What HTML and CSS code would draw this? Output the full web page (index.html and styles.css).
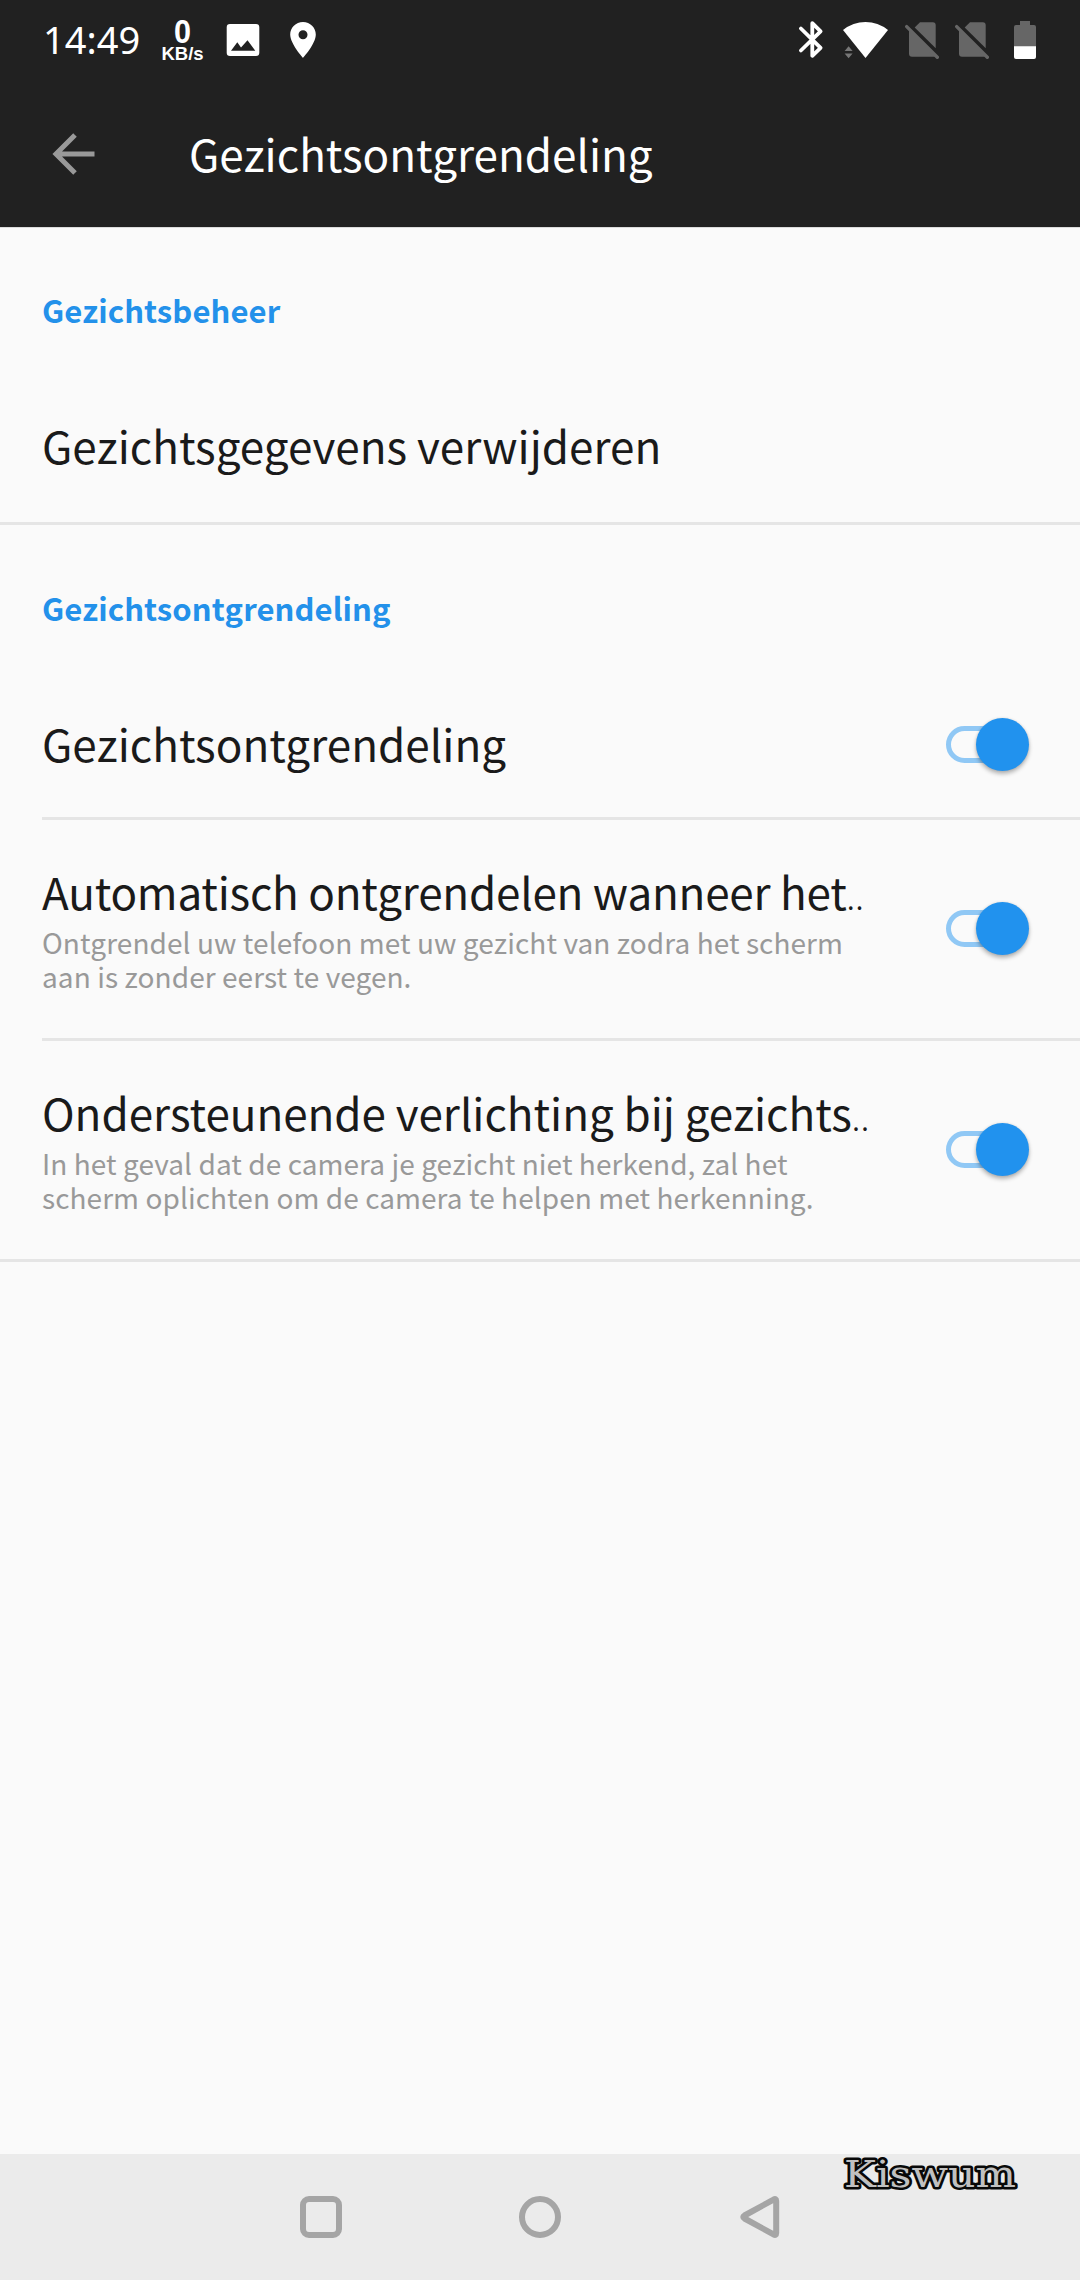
FILE: index.html
```html
<!DOCTYPE html>
<html lang="nl">
<head>
<meta charset="utf-8">
<title>Gezichtsontgrendeling</title>
<link rel="stylesheet" href="styles.css">
</head>
<body>
<div class="screen">
  <header class="header">
    <div class="status-bar">
      <div class="status-left">
        <span class="clock">14:49</span>
        <div class="speed"><span class="speed-value">0</span><span class="speed-unit">KB/s</span></div>
        <svg class="icon-image" width="34" height="40" viewBox="226 20 34 40"><path fill="#fff" fill-rule="evenodd" d="M230 24h26q3.300 0 3.300 3.300v25.400q0 3.300-3.300 3.300h-26q-3.300 0-3.300-3.300V27.300q0-3.300 3.300-3.300zM231 50.700h24.300L247.500 40.300 241 47.500 237.300 42.300z"/></svg>
        <svg class="icon-pin" width="28" height="40" viewBox="289 20 28 40"><path fill="#fff" fill-rule="evenodd" d="M303 22c-7.200 0-12.800 5.600-12.800 12.600C290.200 44 303 58 303 58s12.800-14 12.800-23.400C315.800 27.600 310.200 22 303 22zm0 8.200a4.500 4.500 0 1 1 0 9 4.500 4.500 0 0 1 0-9z"/></svg>
      </div>
      <div class="status-right">
        <svg width="26" height="40" viewBox="798 20 26 40"><path fill="none" stroke="#fff" stroke-width="3.800" stroke-linecap="round" stroke-linejoin="round" d="M800.900 28.500 820.600 47.900 812.300 55.800V23.200L820.600 31.300 800.900 50.500"/></svg>
        <svg class="icon-wifi" width="46" height="40" viewBox="843 20 46 40"><path fill="#fff" d="M865.500 58 843 30Q853 22 865.500 22T888 30z"/><path fill="#777" d="M844.600 51h8l-4-4.800zM844.600 53.400h8l-4 4.800z"/></svg>
        <svg class="icon-sim" width="34" height="40" viewBox="905 20 34 40"><g fill="#666"><path d="M914.700 27.500 920 22.200h12.800q2.900 0 2.900 2.900v23.200z"/><path d="M909 29 936 56l-2 .8H912q-3 0-3-3z"/></g><path stroke="#666" stroke-width="3.400" stroke-linecap="round" d="M906.700 26.600 937.300 57.200"/></svg>
        <svg class="icon-sim" width="34" height="40" viewBox="905 20 34 40"><g fill="#666"><path d="M914.700 27.500 920 22.200h12.800q2.900 0 2.900 2.900v23.200z"/><path d="M909 29 936 56l-2 .8H912q-3 0-3-3z"/></g><path stroke="#666" stroke-width="3.400" stroke-linecap="round" d="M906.700 26.600 937.300 57.200"/></svg>
        <svg class="icon-battery" width="22" height="40" viewBox="1014 20 22 40"><path fill="#666" d="M1020 21h10v4h4q2 0 2 2v20h-22V27q0-2 2-2h4z"/><path fill="#fff" d="M1014 46.300h22V57q0 2-2 2h-18q-2 0-2-2z"/></svg>
      </div>
    </div>
    <div class="app-bar">
      <svg width="44" height="44" viewBox="52 131.500 44 44"><path fill="none" stroke="#999" stroke-width="5" d="M94.500 153.500H56M75 134.500 56 153.500 75 172.500"/></svg>
      <h1 class="title">Gezichtsontgrendeling</h1>
    </div>
  </header>
  <main class="content">
    <section class="group">
      <h2 class="category">Gezichtsbeheer</h2>
      <div class="row row-single row-last"><span class="row-title">Gezichtsgegevens verwijderen</span></div>
    </section>
    <section class="group">
      <h2 class="category">Gezichtsontgrendeling</h2>
      <div class="row row-single">
        <span class="row-title">Gezichtsontgrendeling</span>
        <span class="switch"><span class="track"></span><span class="thumb"></span></span>
      </div>
      <div class="row row-detail">
        <div class="row-text">
          <span class="row-title tight">Automatisch ontgrendelen wanneer het<span class="dots">..</span></span>
          <p class="summary">Ontgrendel uw telefoon met uw gezicht van zodra het scherm<br>aan is zonder eerst te vegen.</p>
        </div>
        <span class="switch"><span class="track"></span><span class="thumb"></span></span>
      </div>
      <div class="row row-detail row-last">
        <div class="row-text">
          <span class="row-title even">Ondersteunende verlichting bij gezichts<span class="dots">..</span></span>
          <p class="summary">In het geval dat de camera je gezicht niet herkend, zal het<br>scherm oplichten om de camera te helpen met herkenning.</p>
        </div>
        <span class="switch"><span class="track"></span><span class="thumb"></span></span>
      </div>
    </section>
  </main>
  <nav class="nav-bar">
    <svg width="44" height="44" viewBox="0 0 44 44"><rect class="nav-shape" x="4" y="4" width="36" height="36" rx="6"/></svg>
    <svg width="44" height="44" viewBox="0 0 44 44"><circle class="nav-shape" cx="22" cy="22" r="18"/></svg>
    <svg width="44" height="44" viewBox="0 0 44 44"><path class="nav-shape" d="M39.200 6V38Q39.200 41 36.500 39.400L7.500 23.500Q5 22 7.500 20.500L36.500 4.600Q39.200 3 39.200 6z"/></svg>
    <svg class="watermark" width="190" height="50" viewBox="0 0 190 50"><text x="9" y="35" textLength="172" lengthAdjust="spacingAndGlyphs">Kiswum</text></svg>
  </nav>
</div>
</body>
</html>
```
FILE: styles.css
```css
* { box-sizing: border-box; }
body { margin: 0; }
h1, h2, p { margin: 0; font-weight: 400; }
svg { display: block; flex: none; }

.screen {
  display: flex;
  flex-direction: column;
  width: 1080px;
  height: 2280px;
  background: #fafafa;
  color: #1a1a1a;
  font-family: "Noto Sans CJK JP", "Noto Sans", sans-serif;
  overflow: hidden;
}

.header { height: 227px; background: #212121; color: #fff; box-shadow: 0 1px 0 #dcdcdc; }
.status-bar { display: flex; justify-content: space-between; height: 80px; padding: 0 44px 0 43px; }
.status-left, .status-right { display: flex; align-items: center; height: 80px; }
.clock { width: 118px; font-family: "Noto Sans", sans-serif; font-size: 38px; line-height: 78px; margin-bottom: 2px; }
.speed { display: flex; flex-direction: column; align-items: center; width: 43px; font-family: "Liberation Sans", sans-serif; font-weight: 700; }
.speed-value { height: 28px; font-size: 34px; line-height: 28px; transform: scaleX(.9); }
.speed-unit { font-size: 18.5px; line-height: 18px; }
.icon-image { margin-left: 22px; }
.icon-pin { margin-left: 29px; }
.icon-wifi { margin-left: 19px; }
.icon-sim { margin-left: 16px; }
.icon-battery { margin-left: 25px; }

.app-bar { display: flex; align-items: center; gap: 93px; height: 147px; padding: 0 52px; }
.title { margin-bottom: 1px; font-size: 44px; line-height: 54px; }

.category { height: 150px; padding: 60px 42px 0; color: #2391ea; font-size: 31px; font-weight: 700; line-height: 45px; letter-spacing: .1px; }
.row { display: flex; justify-content: space-between; margin-left: 42px; padding-right: 51px; border-bottom: 3px solid #e5e5e5; }
.row-last { margin-left: 0; padding-left: 42px; }
.row-single { height: 145px; padding-top: 41px; }
.row-single.row-last { height: 148px; }
.row-detail { height: 221px; padding-top: 44px; }
.row-title { display: block; height: 54px; font-size: 44px; line-height: 54px; letter-spacing: .02px; white-space: nowrap; }
.tight { letter-spacing: -.22px; }
.even { letter-spacing: -.03px; }
.dots { font-size: 34px; font-weight: 300; line-height: 0; letter-spacing: .3px; }
.summary { margin-top: 7px; color: #999; font-size: 28px; line-height: 34px; letter-spacing: .07px; white-space: nowrap; }

.switch { display: grid; flex: none; align-items: center; width: 83px; height: 53px; }
.row-single .switch { margin-top: 2px; }
.row-detail .switch { margin-top: 38px; }
.track, .thumb { grid-area: 1 / 1; }
.track { width: 70px; height: 37px; border: 5px solid #90c8f5; border-radius: 19px; }
.thumb { justify-self: end; width: 53px; height: 53px; border-radius: 50%; background: #2192ee; box-shadow: 0 3px 4px rgba(0, 0, 0, .28), 0 0 3px rgba(0, 0, 0, .1); }

.nav-bar { position: relative; display: flex; align-items: center; justify-content: center; gap: 175px; height: 126px; margin-top: auto; background: #ebebeb; }
.nav-shape { fill: none; stroke: #a5a5a5; stroke-width: 6; stroke-linejoin: round; }
.watermark { position: absolute; left: 835px; top: -2px; }
.watermark text { font-family: "DejaVu Serif", serif; font-size: 38px; fill: #c0c0c0; stroke: #080808; stroke-width: 5px; stroke-linejoin: round; paint-order: stroke; }
```
